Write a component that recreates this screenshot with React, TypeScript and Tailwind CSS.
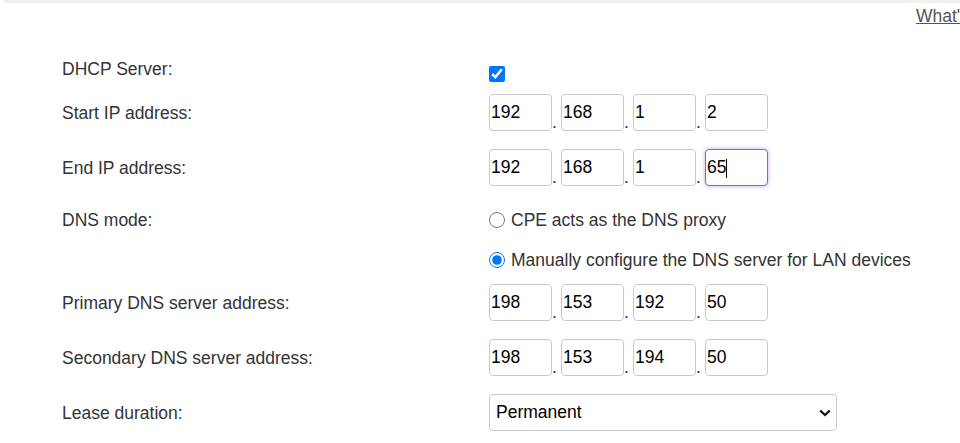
import React from "react";

const FONT = "font-['Liberation_Sans',Arial,sans-serif]";

// One octet box of an IPv4 field.
const Octet: React.FC<{ value: string; focused?: boolean }> = ({ value, focused }) => (
  <div className="relative">
    <input
      readOnly
      defaultValue={value}
      className={`block w-[63px] h-[37px] rounded-[4px] border bg-white pl-[1px] text-[17.5px] text-black outline-none ${FONT} ${
        focused
          ? "border-[#9160c4] shadow-[0_0_4px_rgba(150,100,200,0.55)]"
          : "border-[#c9c9c9]"
      }`}
    />
    {focused && (
      <span className="absolute left-[21px] top-[10px] h-[19px] w-[1px] bg-black" />
    )}
  </div>
);

const IpField: React.FC<{ octets: string[]; focusLast?: boolean }> = ({ octets, focusLast }) => (
  <div className="flex h-[37px]">
    {octets.map((o, i) => (
      <React.Fragment key={i}>
        <Octet value={o} focused={focusLast && i === 3} />
        {i < 3 && (
          <span className="w-[9px] self-end leading-[20px] -mb-[1px] text-[#333]">.</span>
        )}
      </React.Fragment>
    ))}
  </div>
);

const Label: React.FC<{ children: React.ReactNode }> = ({ children }) => (
  <div className="w-[427px] shrink-0 leading-[20px] text-[#333]">{children}</div>
);

export default function App() {
  return (
    <div className={`w-[960px] h-[443px] overflow-hidden bg-white text-[17.5px] ${FONT}`}>
      <div className="h-[3px] ml-[3px] rounded-bl-[3px] bg-[#f1f1f1]" />

      <div className="mt-[3px] h-[20px] overflow-hidden whitespace-nowrap pl-[916px] leading-[20px]">
        <a className="text-[#555] underline">What's this?</a>
      </div>

      <div className="pl-[62px]">
        {/* DHCP server */}
        <div className="mt-[33px] flex h-[24px] items-start">
          <Label>DHCP Server:</Label>
          <input
            type="checkbox"
            defaultChecked
            className="m-0 mt-[7px] h-[16px] w-[16px] accent-[#0075ff]"
          />
        </div>

        <div className="mt-[11px] flex h-[37px] items-center">
          <Label>Start IP address:</Label>
          <IpField octets={["192", "168", "1", "2"]} />
        </div>

        <div className="mt-[18px] flex h-[37px] items-center">
          <Label>End IP address:</Label>
          <IpField octets={["192", "168", "1", "65"]} focusLast />
        </div>

        {/* DNS mode */}
        <div className="mt-[24px] flex items-start">
          <Label>DNS mode:</Label>
          <div className="flex flex-col gap-[20px] text-[#333]">
            <label className="flex h-[20px] items-center gap-[6px] leading-[20px]">
              <input type="radio" name="dns" className="m-0 h-[16px] w-[16px] accent-[#0075ff]" />
              CPE acts as the DNS proxy
            </label>
            <label className="flex h-[20px] items-center gap-[6px] leading-[20px] whitespace-nowrap">
              <input
                type="radio"
                name="dns"
                defaultChecked
                className="m-0 h-[16px] w-[16px] accent-[#0075ff]"
              />
              Manually configure the DNS server for LAN devices
            </label>
          </div>
        </div>

        <div className="mt-[14px] flex h-[37px] items-center">
          <Label>Primary DNS server address:</Label>
          <IpField octets={["198", "153", "192", "50"]} />
        </div>

        <div className="mt-[18px] flex h-[37px] items-center">
          <Label>Secondary DNS server address:</Label>
          <IpField octets={["198", "153", "194", "50"]} />
        </div>

        <div className="mt-[18px] flex h-[37px] items-center">
          <Label>Lease duration:</Label>
          <div className="relative">
            <select
              defaultValue="permanent"
              className={`block h-[37px] w-[348px] appearance-none rounded-[4px] border border-[#c9c9c9] bg-white pl-[6px] text-[17.5px] text-black outline-none ${FONT}`}
            >
              <option value="permanent">Permanent</option>
              <option value="1d">1 day</option>
              <option value="1w">1 week</option>
            </select>
            <svg
              className="pointer-events-none absolute left-[330px] top-[15px]"
              width="12"
              height="8"
              viewBox="0 0 12 8"
              fill="none"
            >
              <path d="M1.2 1.5 L6 6 L10.8 1.5" stroke="#111" strokeWidth="2.2" />
            </svg>
          </div>
        </div>
      </div>
    </div>
  );
}
